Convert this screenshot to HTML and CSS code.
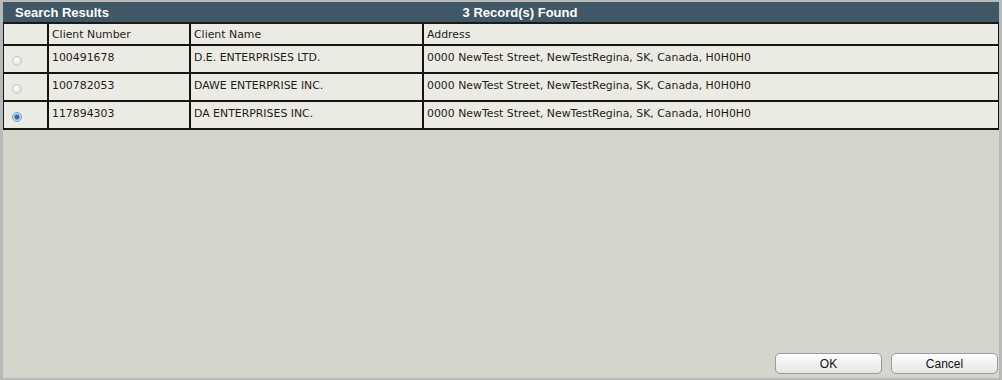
FILE: index.html
```
<html lang="en">
<head>
    <meta charset="UTF-8">
    <title>Search Results</title>
    <link rel="stylesheet" href="styles.css">
</head>
<body>
    <div class="dialog">
        <!-- Barra de titulo -->
        <div class="titlebar">
            <span class="title">Search Results</span>
            <span class="count">3 Record(s) Found</span>
        </div>

        <!-- Resultados -->
        <table class="results">
            <thead>
                <tr>
                    <th class="col-sel"></th>
                    <th class="col-num">Client Number</th>
                    <th class="col-name">Client Name</th>
                    <th>Address</th>
                </tr>
            </thead>
            <tbody>
                <tr>
                    <td class="sel"><span class="radio"></span></td>
                    <td>100491678</td>
                    <td>D.E. ENTERPRISES LTD.</td>
                    <td>0000 NewTest Street, NewTestRegina, SK, Canada, H0H0H0</td>
                </tr>
                <tr>
                    <td class="sel"><span class="radio"></span></td>
                    <td>100782053</td>
                    <td>DAWE ENTERPRISE INC.</td>
                    <td>0000 NewTest Street, NewTestRegina, SK, Canada, H0H0H0</td>
                </tr>
                <tr>
                    <td class="sel"><span class="radio checked"></span></td>
                    <td>117894303</td>
                    <td>DA ENTERPRISES INC.</td>
                    <td>0000 NewTest Street, NewTestRegina, SK, Canada, H0H0H0</td>
                </tr>
            </tbody>
        </table>

        <div class="actions">
            <button type="button">OK</button>
            <button type="button">Cancel</button>
        </div>
    </div>
</body>
</html>
```
FILE: styles.css
```
body {
    margin: 0;
    padding: 0;
    font-family: "DejaVu Sans", Verdana, sans-serif;
    background-color: #b9b9b9;
}
.dialog {
    box-sizing: border-box;
    height: 380px;
    border: 2px solid #b9b9b9;
    border-left-width: 3px;
    border-right-width: 3px;
    background-color: #d5d5cc;
    display: flex;
    flex-direction: column;
}
.titlebar {
    display: grid;
    height: 20px;
    align-items: center;
    background-color: #405766;
    border-bottom: 2px solid #161a1c;
    color: white;
    font-family: "Liberation Sans", Arial, sans-serif;
    font-weight: bold;
    font-size: 13px;
}
.title, .count {
    grid-area: 1 / 1;
}
.title {
    justify-self: start;
    padding-left: 12px;
}
.count {
    justify-self: center;
    padding-left: 38px;
}
.results {
    width: 100%;
    border-collapse: collapse;
    background-color: #ecebe3;
    font-size: 10.9px;
    color: #1c1c1c;
}
.results th, .results td {
    border: 2px solid #151515;
    padding: 0 3px;
    text-align: left;
    vertical-align: top;
    font-weight: normal;
    white-space: nowrap;
}
.results thead tr {
    height: 21px;
}
.results thead th {
    border-top: none;
    vertical-align: middle;
}
.results tbody tr {
    height: 28px;
}
.results tbody td {
    padding-top: 5px;
}
.results tr > :first-child {
    border-left-width: 1px;
}
.results tr > :last-child {
    border-right-width: 1px;
}
.col-sel {
    width: 37px;
}
.col-num {
    width: 134px;
}
.col-name {
    width: 225px;
}
.results td.sel {
    text-align: center;
    vertical-align: middle;
    padding: 4px 0 0 0;
}
.radio {
    display: inline-block;
    width: 8px;
    height: 8px;
    border-radius: 50%;
    border: 1px solid #c4c4c4;
    background: radial-gradient(circle at 40% 35%, #ffffff, #d6d6d6);
    margin-right: 17px;
}
.radio.checked {
    border-color: #7d9bb8;
    background: radial-gradient(circle, #1d5f9c 0, #2f78b8 2px, #a8c4de 3px, #e4edf5 4px);
}
.actions {
    margin-top: auto;
    display: flex;
    justify-content: flex-end;
    gap: 9px;
    padding: 0 1px 4px 0;
}
.actions button {
    width: 107px;
    height: 21px;
    border: 1px solid #9a9a9a;
    border-radius: 5px;
    background: linear-gradient(#ffffff, #f1f1f1 50%, #e6e6e6);
    font-family: "Liberation Sans", Arial, sans-serif;
    font-size: 12px;
    color: #111;
    cursor: pointer;
}
```
